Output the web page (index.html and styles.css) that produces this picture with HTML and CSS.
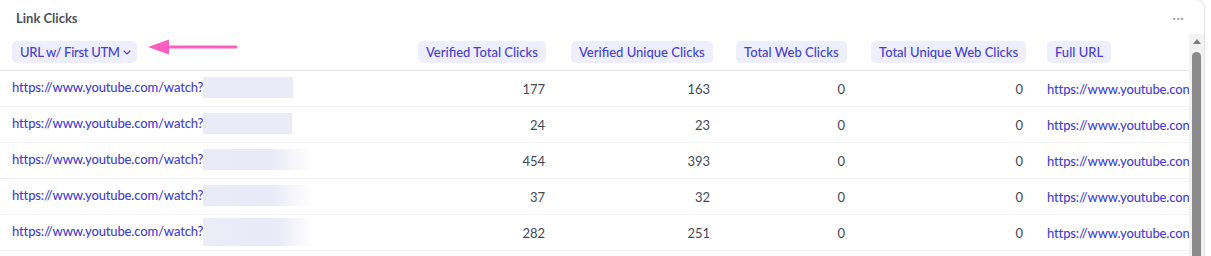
FILE: index.html
```html
<!DOCTYPE html>
<html>
<head>
<meta charset="utf-8">
<link rel="stylesheet" href="styles.css">
</head>
<body>
<div class="card">
  <div class="card-head">
    <span class="title">Link Clicks</span>
    <span class="dots">···</span>
  </div>
  <div class="card-body">
    <div class="table-wrap">
      <table class="grid">
        <colgroup>
          <col class="c1"><col class="c2"><col class="c3"><col class="c4"><col class="c5"><col class="c6">
        </colgroup>
        <thead>
          <tr>
            <th class="left"><span class="pill pill-drop">URL w/ First UTM
              <svg class="chev" width="8" height="5" viewBox="0 0 8 5"><path d="M1 1l3 3L7 1" fill="none" stroke="#4a47c9" stroke-width="1.1" stroke-linecap="round" stroke-linejoin="round"/></svg></span></th>
            <th class="num"><span class="pill">Verified Total Clicks</span></th>
            <th class="num"><span class="pill">Verified Unique Clicks</span></th>
            <th class="num"><span class="pill">Total Web Clicks</span></th>
            <th class="num"><span class="pill">Total Unique Web Clicks</span></th>
            <th class="left last"><span class="pill">Full URL</span></th>
          </tr>
        </thead>
        <tbody>
          <tr>
            <td class="link">https://www.youtube.com/watch?<span class="blur b1"></span></td>
            <td class="num">177</td><td class="num">163</td><td class="num">0</td><td class="num">0</td>
            <td class="link last">https://www.youtube.con</td>
          </tr>
          <tr>
            <td class="link">https://www.youtube.com/watch?<span class="blur b2"></span></td>
            <td class="num">24</td><td class="num">23</td><td class="num">0</td><td class="num">0</td>
            <td class="link last">https://www.youtube.con</td>
          </tr>
          <tr>
            <td class="link">https://www.youtube.com/watch?<span class="blur b3"></span></td>
            <td class="num">454</td><td class="num">393</td><td class="num">0</td><td class="num">0</td>
            <td class="link last">https://www.youtube.con</td>
          </tr>
          <tr>
            <td class="link">https://www.youtube.com/watch?<span class="blur b3"></span></td>
            <td class="num">37</td><td class="num">32</td><td class="num">0</td><td class="num">0</td>
            <td class="link last">https://www.youtube.con</td>
          </tr>
          <tr>
            <td class="link">https://www.youtube.com/watch?<span class="blur b5"></span></td>
            <td class="num">282</td><td class="num">251</td><td class="num">0</td><td class="num">0</td>
            <td class="link last">https://www.youtube.con</td>
          </tr>
        </tbody>
      </table>
      <svg class="arrow" width="92" height="20" viewBox="0 0 92 20">
        <path d="M0 8 L21 0.5 L21 15.5 Z" fill="#fb5fc0"/>
        <path d="M18 8 H88" stroke="#fb5fc0" stroke-width="3" stroke-linecap="round"/>
      </svg>
    </div>
    <div class="scrollbar">
      <div class="sb-up"></div>
      <div class="sb-thumb"></div>
    </div>
  </div>
</div>
</body>
</html>
```

FILE: styles.css
```css
html, body {
  margin: 0;
  padding: 0;
  background: #ffffff;
}
body {
  font-family: Lato, "Noto Sans", sans-serif;
  font-size: 13px;
  color: #3f4654;
  width: 1211px;
  height: 256px;
  overflow: hidden;
}
.card {
  width: 1205px;
  height: 260px;
  box-sizing: border-box;
  border-right: 1px solid #e3e4e8;
  border-top: 1px solid #e3e4e8;
  border-top-right-radius: 9px;
  margin-top: -1px;
  display: flex;
  flex-direction: column;
}
.card-head {
  height: 34px;
  display: flex;
  align-items: center;
  justify-content: space-between;
  padding: 0 20px 0 16px;
  box-sizing: border-box;
  flex: none;
}
.title {
  font-weight: 700;
  font-size: 13px;
  color: #4b5160;
  margin-top: 2px;
}
.dots {
  color: #9aa0ab;
  font-size: 15px;
  margin-top: -1px;
}
.card-body {
  display: flex;
  flex: 1;
  min-height: 0;
}
.table-wrap {
  flex: 1;
  overflow: hidden;
  position: relative;
}
.grid {
  border-collapse: collapse;
  table-layout: fixed;
  width: 1436px;
}
.c1 { width: 405px; }
.c2 { width: 153px; }
.c3 { width: 165px; }
.c4 { width: 135px; }
.c5 { width: 178px; }
.c6 { width: 400px; }
th {
  padding: 7px 13px;
  height: 22px;
  font-weight: 400;
  border-bottom: 1px solid #e6e7ea;
  white-space: nowrap;
}
th.left { text-align: left; padding-left: 12px; }
th.num { text-align: right; }
th.last { padding-left: 11px; }
.pill {
  display: inline-flex;
  align-items: center;
  height: 22px;
  padding: 0 8px;
  background: #efeefc;
  border-radius: 5px;
  color: #4541cf;
  font-weight: 500;
  font-size: 13px;
  box-sizing: border-box;
  vertical-align: top;
}
.pill-drop {
  padding-right: 6px;
  letter-spacing: -0.3px;
}
.chev { margin-left: 3px; margin-top: 1px; }
td {
  height: 36px;
  padding: 0 13px;
  border-bottom: 1px solid #f1f1f3;
  white-space: nowrap;
  overflow: hidden;
  box-sizing: border-box;
}
td.link {
  color: #4541cf;
  font-weight: 500;
  padding-left: 12px;
  letter-spacing: -0.15px;
}
td.link.last { padding-left: 11px; }
td.num {
  text-align: right;
  color: #424957;
}
.blur {
  display: inline-block;
  vertical-align: middle;
  height: 21px;
  margin-top: -2px;
  background: #ebebf8;
}
.b1 { width: 90px; }
.b2 { width: 89px; }
.b3 {
  width: 110px;
  background: linear-gradient(90deg, #ebebf8 0%, #e9e9f7 60%, rgba(235,235,248,0) 100%);
}
.b5 {
  width: 111px;
  height: 28px;
  background: linear-gradient(90deg, #ededf8 0%, #e9e9f7 65%, rgba(235,235,248,0) 100%);
}
.arrow {
  position: absolute;
  left: 148px;
  top: 5px;
}
.scrollbar {
  width: 15px;
  flex: none;
  background: #f3f3f3;
  display: flex;
  flex-direction: column;
  align-items: center;
}
.sb-up {
  width: 0;
  height: 0;
  margin-top: 5px;
  border-left: 4px solid transparent;
  border-right: 4px solid transparent;
  border-bottom: 5px solid #7c7c7c;
}
.sb-thumb {
  margin-top: 8px;
  width: 9px;
  flex: 1;
  background: #8a8a8a;
  border-radius: 5px 5px 0 0;
}
```
